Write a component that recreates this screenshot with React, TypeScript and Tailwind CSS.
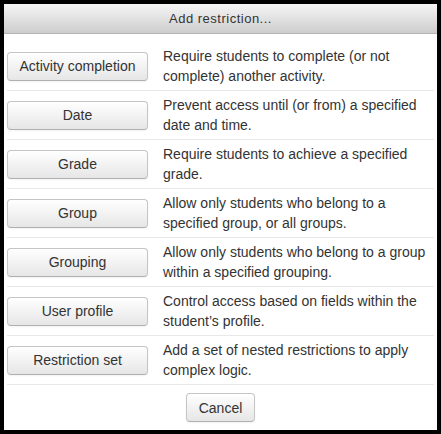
import React from "react";

const rows: [string, string][] = [
  ["Activity completion", "Require students to complete (or not complete) another activity."],
  ["Date", "Prevent access until (or from) a specified date and time."],
  ["Grade", "Require students to achieve a specified grade."],
  ["Group", "Allow only students who belong to a specified group, or all groups."],
  ["Grouping", "Allow only students who belong to a group within a specified grouping."],
  ["User profile", "Control access based on fields within the student\u2019s profile."],
  ["Restriction set", "Add a set of nested restrictions to apply complex logic."],
];

const btn =
  "rounded-[4px] border border-[#c5c5c5] border-b-[#b0b0b0] bg-gradient-to-b from-white to-[#e6e6e6] text-[14px] leading-[20px] text-[#333] shadow-[inset_0_1px_0_rgba(255,255,255,0.2),0_1px_2px_rgba(0,0,0,0.05)]";

export default function App() {
  return (
    <div className="w-[441px] h-[434px] bg-black p-[4px]" style={{ fontFamily: '"Liberation Sans", Arial, sans-serif' }}>
      <div className="flex h-full flex-col bg-white">
        <div className="flex h-[30px] items-center justify-center border-b border-[#b4b4b4] bg-gradient-to-b from-[#f6f6f6] to-[#cdcdcd] text-[13px] tracking-[0.5px] text-[#333]">
          Add restriction...
        </div>
        <div className="px-[3px] pt-[8px]">
          {rows.map(([label, desc], i) => (
            <div
              key={label}
              className={`flex items-center py-[4px] ${i > 0 ? "border-t border-[#e8e8e8]" : ""}`}
            >
              <button className={`${btn} h-[29px] w-[141px] shrink-0`}>{label}</button>
              <div className="ml-[15px] flex-1 text-[14px] leading-[20px] text-[#333]">{desc}</div>
            </div>
          ))}
          <div className="flex justify-center border-t border-[#e8e8e8] pt-[8px]">
            <button className={`${btn} h-[29px] w-[69px]`}>Cancel</button>
          </div>
        </div>
      </div>
    </div>
  );
}
